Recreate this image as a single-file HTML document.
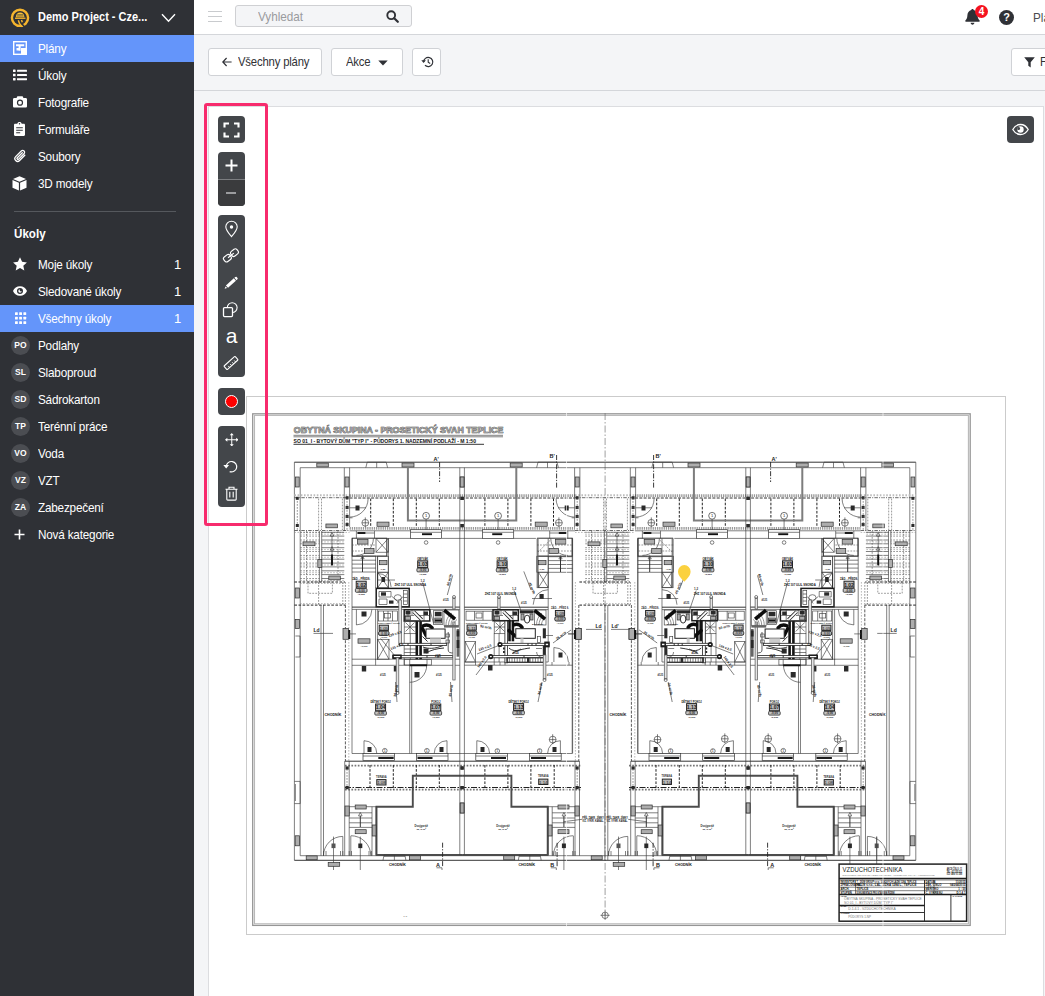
<!DOCTYPE html>
<html lang="cs">
<head>
<meta charset="utf-8">
<title>Plány</title>
<style>
*{box-sizing:border-box;margin:0;padding:0}
html,body{width:1045px;height:996px;overflow:hidden;background:#f4f5f7;font-family:"Liberation Sans",sans-serif;color:#2f3136}
#side{position:absolute;left:0;top:0;width:194px;height:996px;background:#2f3136;color:#fff}
#side .hd{position:absolute;left:0;top:0;width:194px;height:35px;background:#2f3136}
#side .hd .nm{position:absolute;left:38px;top:9px;font-size:13px;font-weight:bold;white-space:nowrap;transform:scaleX(.845);transform-origin:0 50%}
.it{position:absolute;left:0;width:194px;height:27px;font-size:13px;line-height:27px;white-space:nowrap;letter-spacing:-0.2px}
.it.on{background:#6495fa}
.it .tx{position:absolute;left:38px;top:0;transform:scaleX(.9);transform-origin:0 50%}
.sh{position:absolute;left:14px;top:226px;font-size:13.5px;font-weight:bold;transform:scaleX(.86);transform-origin:0 50%;white-space:nowrap}
.it .ct{position:absolute;right:13px;top:0}
.it svg{position:absolute}
.bd{position:absolute;left:11px;top:4px;width:19px;height:19px;border-radius:50%;background:#4b4d52;font-size:8.5px;font-weight:bold;line-height:19px;text-align:center;letter-spacing:0}
#top{position:absolute;left:194px;top:0;width:851px;height:35px;background:#fff;border-bottom:1px solid #d4d6da}
#bar{position:absolute;left:194px;top:35px;width:851px;height:56px;background:#f4f5f7;border-bottom:1px solid #d4d6da}
.btn{position:absolute;top:13px;height:28px;padding-top:1px;background:#fff;border:1px solid #d0d2d6;border-radius:3px;font-size:13px;line-height:26px;white-space:nowrap;letter-spacing:-0.2px;color:#2f3136}
.bt{position:absolute;top:0;transform:scaleX(.87);transform-origin:0 50%}
#cv{position:absolute;left:208px;top:106px;width:836px;height:900px;background:#fff;border:1px solid #dcdde0}
.tb{position:absolute;left:218px;width:27px;background:#43464a;border-radius:4px}
#hl{position:absolute;left:204px;top:103px;width:64px;height:423px;border:3px solid #f72b6d;border-radius:3px}
</style>
</head>
<body>
<div id="top">
<div style="position:absolute;left:14px;top:11px;width:14px;height:1px;background:#c9cbce;box-shadow:0 5px 0 #c9cbce,0 10px 0 #c9cbce"></div>
<div style="position:absolute;left:41px;top:5px;width:177px;height:22px;background:#f4f5f7;border:1px solid #cfd0d3;border-radius:3px"></div>
<span style="position:absolute;left:64px;top:9px;font-size:13px;color:#9a9b9e;transform:scaleX(.9);transform-origin:0 50%;white-space:nowrap">Vyhledat</span>
<svg style="position:absolute;left:192px;top:10px" width="13" height="13" viewBox="0 0 13 13"><circle cx="5.200" cy="5.200" r="3.900" fill="none" stroke="#2f3136" stroke-width="1.900"/><path d="M8.200 8.200 11.800 11.800" stroke="#2f3136" stroke-width="2.200" stroke-linecap="round"/></svg>
<svg style="position:absolute;left:771px;top:8px" width="15" height="18" viewBox="0 0 15 18"><path fill="#2f3136" d="M7.500 1c.7 0 1.200.5 1.200 1.100 2.400.6 3.900 2.700 3.900 5.200 0 3.300 1.300 4.400 2 5.100.5.500.1 1.400-.6 1.400H1c-.7 0-1.100-.9-.6-1.400.700-.7 2-1.800 2-5.100 0-2.500 1.500-4.600 3.900-5.200C6.300 1.500 6.800 1 7.500 1zM5.600 14.800h3.800c0 1-.9 1.900-1.900 1.900s-1.900-.9-1.900-1.900z"/></svg>
<div style="position:absolute;left:781px;top:5px;width:13px;height:13px;border-radius:50%;background:#f5121f;color:#fff;font-size:10px;font-weight:bold;line-height:13px;text-align:center">4</div>
<div style="position:absolute;left:805px;top:10px;width:15px;height:15px;border-radius:50%;background:#2f3136;color:#fff;font-size:11px;font-weight:bold;line-height:15px;text-align:center">?</div>
<span style="position:absolute;left:839px;top:10px;font-size:13px;color:#4a4c50;white-space:nowrap;transform:scaleX(.9);transform-origin:0 50%">Plány</span>
</div>
<div id="bar">
<div class="btn" style="left:14px;width:114px"><svg style="position:absolute;left:13px;top:8px" width="10" height="10" viewBox="0 0 10 10"><path d="M9.600 5H1M4.600 1 .8 5l3.800 4" fill="none" stroke="#2f3136" stroke-width="1.200"/></svg><span class="bt" style="left:29px">Všechny plány</span></div>
<div class="btn" style="left:137px;width:72px"><span class="bt" style="left:14px">Akce</span><svg style="position:absolute;left:46px;top:11px" width="10" height="6" viewBox="0 0 10 6"><path d="M.3.5h9.400L5 5.500z" fill="#2f3136"/></svg></div>
<div class="btn" style="left:218px;width:29px"><svg style="position:absolute;left:8px;top:7px" width="13" height="12" viewBox="0 0 13 12"><path d="M2.600 6a4.600 4.600 0 1 1 1.400 3.300" fill="none" stroke="#2f3136" stroke-width="1.200"/><path d="M.3 4.200h4.600L2.600 7z" fill="#2f3136"/><path d="M7.200 3.300v3l2 1.200" fill="none" stroke="#2f3136" stroke-width="1.100"/></svg></div>
<div class="btn" style="left:817px;width:60px"><svg style="position:absolute;left:12px;top:8px" width="11" height="11" viewBox="0 0 11 11"><path d="M.2.300h10.600L6.700 5.200v5.300L4.300 8.700V5.200z" fill="#2f3136"/></svg><span class="bt" style="left:28px">Filtr</span></div>
</div>
<div id="cv"></div>
<!--PLAN-->
<svg id="plan" width="1045" height="996" viewBox="0 0 1045 996" style="position:absolute;left:0;top:0">
<style>
.t{fill:none;stroke:#3d3d3d;stroke-width:.65}
.m{fill:none;stroke:#2a2a2a;stroke-width:.95}
.k{fill:none;stroke:#1c1c1c;stroke-width:1.5}
.kk{fill:none;stroke:#111;stroke-width:1.9}
.p{fill:none;stroke:#222;stroke-width:1.7}
.p3{fill:none;stroke:#151515;stroke-width:2.6}
.g{fill:none;stroke:#7d7d7d;stroke-width:2}
.g2{fill:none;stroke:#4c4c4c;stroke-width:1.9}
.d{fill:none;stroke:#555;stroke-width:.6;stroke-dasharray:1.8 1.2}
.dl{fill:none;stroke:#8a8a8a;stroke-width:.6;stroke-dasharray:1.6 1.4}
.dk{fill:none;stroke:#222;stroke-width:1;stroke-dasharray:2.6 1.5}
.dk2{fill:none;stroke:#333;stroke-width:.8;stroke-dasharray:3 1.4}
.dd{fill:none;stroke:#222;stroke-width:.9;stroke-dasharray:5 1.500 1.2 1.500}
.dd2{fill:none;stroke:#777;stroke-width:.7;stroke-dasharray:7 2 1.500 2}
.dd3{fill:none;stroke:#222;stroke-width:1.100;stroke-dasharray:6 1.500 1.500 1.500}
.bb{fill:none;stroke:#9a9a9a;stroke-width:2.8;stroke-dasharray:1.3 .9}
.bl{fill:none;stroke:#bdbdbd;stroke-width:2;stroke-dasharray:1.6 1.6}
.dd4{fill:none;stroke:#444;stroke-width:.8;stroke-dasharray:3.5 1.2 1 1.2}
.bdk{fill:none;stroke:#333;stroke-width:1;stroke-dasharray:3 1.300}
.bz{fill:none;stroke:#777;stroke-width:1.800;stroke-dasharray:1.700 1.500}
.lb{fill:#adadad;stroke:#2e2e2e;stroke-width:.7}
.rb{fill:#b9b9b9;stroke:#1e1e1e;stroke-width:.95}
.rb2{fill:#c4c4c4;stroke:#2a2a2a;stroke-width:.8}
.xr{fill:#1a1a1a;font-weight:bold}
.wb{fill:#fff;stroke:#333;stroke-width:.7}
.uw{fill:#fff;stroke:#222;stroke-width:1}
.cw{fill:#fff;stroke:#333;stroke-width:.7}
.bk{fill:#2a2a2a;stroke:none}
.bk2{fill:#555;stroke:none}
.p4{fill:none;stroke:#0c0c0c;stroke-width:3.4;stroke-linecap:round}
.p5{fill:none;stroke:#0c0c0c;stroke-width:3.6}
.duo{fill:none;stroke:#222;stroke-width:3.4}
.dui{fill:none;stroke:#fff;stroke-width:1.8}
.du{fill:#fff;stroke:#222;stroke-width:.8}
.du2{fill:none;stroke:#333;stroke-width:.8}
.dg{fill:#e4e4e4;stroke:#555;stroke-width:.7}
.dg2{fill:#ccc;stroke:none}
.hg{fill:none;stroke:#888;stroke-width:.9}
.hk3{fill:#666;stroke:none}
.hk{fill:none;stroke:#111;stroke-width:1.300}
.hk2{fill:#333;stroke:none}
.fo{fill:none;stroke:#cbcbcb;stroke-width:1}
.fi{fill:none;stroke:#969696;stroke-width:1.3}
.fi2{fill:none;stroke:#b8b8b8;stroke-width:1.1}
.wh{fill:#fff;stroke:none}
.tbx{fill:#fff;stroke:#222;stroke-width:1.500}
text{font-family:"Liberation Sans",sans-serif;fill:#333}
.x{fill:#444}
.xb{fill:#333;font-weight:bold}
.xk{fill:#111;font-weight:bold}
.xn{fill:#222}
.tt{font-weight:bold;fill:#9d9d9d;stroke:#333;stroke-width:.6;paint-order:stroke}
.ts{font-weight:bold;fill:#111}
.tv{fill:#222}
.tg{fill:#777}
</style>
<defs>
<g id="strip"><path class="d" d="M318.6 498.6V530M321.5 498.6V530M342.4 498.6V530"/>
<rect class="lb" x="325.9" y="524" width="11.5" height="3.8"/>
<path class="t" d="M321.7 532.3L344.3 532.3"/>
<path class="t" d="M321.7 536.1L344.3 536.1"/>
<path class="t" d="M321.7 540L344.3 540"/>
<path class="t" d="M321.7 543.8L344.3 543.8"/>
<path class="t" d="M321.7 547.7L344.3 547.7"/>
<path class="t" d="M321.7 551.5L344.3 551.5"/>
<path class="t" d="M321.7 555.4L344.3 555.4"/>
<path class="t" d="M321.7 559.2L344.3 559.2"/>
<path class="t" d="M321.7 563.1L344.3 563.1"/>
<path class="t" d="M321.7 566.9L344.3 566.9"/>
<path class="t" d="M321.7 570.8L344.3 570.8"/>
<path class="t" d="M321.7 574.6L344.3 574.6"/>
<path class="t" d="M321.7 578.5L344.3 578.5"/>
<path class="d" d="M300.2 532.3L319.4 532.3"/>
<path class="d" d="M300.2 536.1L319.4 536.1"/>
<path class="d" d="M300.2 540L319.4 540"/>
<path class="d" d="M300.2 543.8L319.4 543.8"/>
<path class="d" d="M300.2 547.7L319.4 547.7"/>
<path class="d" d="M300.2 551.5L319.4 551.5"/>
<path class="d" d="M300.2 555.4L319.4 555.4"/>
<path class="d" d="M300.2 559.2L319.4 559.2"/>
<path class="d" d="M300.2 563.1L319.4 563.1"/>
<path class="d" d="M300.2 566.9L319.4 566.9"/>
<path class="d" d="M300.2 570.8L319.4 570.8"/>
<path class="d" d="M300.2 574.6L319.4 574.6"/>
<path class="d" d="M300.2 578.5L319.4 578.5"/>
<path class="dl" d="M300.2 534.2L344.3 534.2"/>
<path class="dl" d="M300.2 541.9L344.3 541.9"/>
<path class="dl" d="M300.2 549.6L344.3 549.6"/>
<path class="dl" d="M300.2 557.3L344.3 557.3"/>
<path class="dl" d="M300.2 565L344.3 565"/>
<path class="dl" d="M300.2 572.7L344.3 572.7"/>
<path class="dl" d="M300.2 580.4L344.3 580.4"/>
<path class="t" d="M319.4 531V582M321.7 531V582"/>
<path class="d" d="M306.5 531V582"/>
<path class="d" d="M338 531V582"/>
<rect class="lb" x="303" y="541.9" width="12" height="3.8"/>
<rect class="lb" x="317.8" y="559.5" width="4" height="8"/>
<path class="t" d="M332 532.5l-1.8 3.6h3.600zM332 546.600l-1.8 3.600h3.600z"/>
<path class="t" d="M332 536L332 566"/>
<path class="kk" d="M332 554.5L332 565.2"/>
<path class="dk" d="M294.4 582L345 582"/>
<path class="dk" d="M294.4 605.1L345 605.1"/>
<path class="dl" d="M300 583.5L345 583.5"/>
<path class="dl" d="M300 603.6L345 603.6"/>
<rect class="d" x="308" y="582" width="24.4" height="11.3"/>
<rect class="lb" x="328.8" y="576" width="11.5" height="3.8"/>
<path class="d" d="M342.8 582V605M345.4 582V605"/>
<path class="d" d="M318.6 582V605"/>

<path class="t" d="M323.5 855.7A19.3 19.3 0 0 1 342.8 836.4"/>
<path class="t" d="M342.8 836.4L342.8 855.7"/>
<path class="t" d="M333.5 836.6L333.5 870"/>
<rect class="lb" x="306.2" y="855.9" width="11" height="3.8"/>
<rect class="bk2" x="331.5" y="843.5" width="4" height="4.6"/>
<path class="t" d="M323.5 851v4.7M326 851v4.7M340.500 851v4.7M342.800 851v4.7"/></g>
<g id="stro"><rect class="lb" x="316.8" y="463.1" width="11.5" height="3.8"/>
<rect class="lb" x="295.4" y="477" width="3.8" height="10"/>
<path class="d" d="M297.3 498L297.3 530"/>
<rect class="bk" x="295.8" y="496.8" width="3" height="3"/>
<rect class="bk" x="295.8" y="524" width="3" height="3"/>
<path class="t" d="M321 605V855.7M323.5 605V855.7"/>
<rect class="lb" x="295.2" y="588" width="4.4" height="10"/>
<rect class="lb" x="295.2" y="619.4" width="4.4" height="9.2"/>
<path class="t" d="M295.4 636h4.6v21h-4.6"/>

<path class="t" d="M313.5 633.4L333 633.4"/>
<path class="t" d="M294.4 781.4h5.8v22.2h-5.8M295.400 784v17"/>
<rect class="lb" x="295.2" y="835.8" width="4.4" height="10"/>
<rect class="lb" x="328.2" y="862.5" width="11.5" height="3.8"/></g>
<g id="shl"><path class="t" d="M344.3 467.7V530.8M349.6 467.7V527"/>
<rect class="lb" x="345" y="477" width="4" height="10"/>
<rect class="bk" x="345.6" y="496.2" width="3" height="3.2"/>
<rect class="bk" x="345.6" y="505.9" width="3" height="3.2"/>
<rect class="bk" x="345.6" y="514.9" width="3" height="3.2"/>
<rect class="bk" x="345.6" y="522.9" width="3" height="3.2"/>
<path class="d" d="M347 498L347 530"/>
<path class="t" d="M368.1 498.6A18.5 18.5 0 0 1 349.6 517.1"/>
<path class="t" d="M349.6 507.8L366 507.8"/>
<path class="t" d="M349.6 517.8L352.5 517.8"/>
<rect class="bk" x="355.5" y="505.5" width="4" height="5"/>
<path class="dk" d="M370.7 498.6L370.7 527"/>
<path class="dk" d="M393.3 498.6L393.3 527"/>
<path class="dk" d="M416.3 498.6L416.3 527"/>
<path class="dk" d="M439.3 498.6L439.3 527"/>
<rect class="lb" x="402" y="463" width="12" height="4"/>
<rect class="lb" x="377" y="522.1" width="12" height="4.2"/>
<circle class="t" cx="365.3" cy="522.8" r="3.4"/><path class="t" d="M361.9 522.8L368.7 522.8"/><path class="t" d="M365.3 517.4L365.3 527.2"/>
<path class="t" d="M365.8 467.7l1.400-5.5h19l1.400 5.5M376.700 462.2v5.5"/>
<path class="g" d="M407.900 467.7V520.6H462.1"/>
<circle class="cw" cx="426.1" cy="515.8" r="3.4"/>

<path class="t" d="M426.1 519.2L426.1 533"/>
<rect class="wb" x="410.5" y="529.7" width="31.1" height="8.7"/>
<path class="kk" d="M422 534.2L432 534.2"/>
<path class="t" d="M410.5 532.3L441.6 532.3"/>
<circle class="t" cx="426.1" cy="542.5" r="1.8"/>
<path class="t" d="M388.3 538.4L410.5 538.4"/>
<path class="t" d="M441.6 538.4L462.1 538.4"/>
<path class="dk2" d="M345.4 605V761"/>
<path class="dl" d="M348.8 582L348.8 761"/>
<path class="t" d="M352 538.4L352 753.5"/>
<rect class="lb" x="343" y="628.5" width="5.5" height="10.8"/>
<path class="kk" d="M349.3 630L349.3 639"/>
<path class="t" d="M349 633.9L356 633.9"/>
<path class="t" d="M352 753.5L462.1 753.5"/>
<path class="m" d="M345 761.2L462.1 761.2"/>
<path class="t" d="M344.7 761V855.7M349.2 761V855.7"/>
<rect class="bk" x="345.5" y="766.4" width="3.2" height="3.2"/>
<rect class="bk" x="345.5" y="786" width="3.2" height="3.2"/>
<path class="d" d="M347 769L347 786"/>
<path class="dk" d="M370 765L370 790"/>
<path class="dk" d="M393.3 765L393.3 790"/>
<path class="dk" d="M416.3 765L416.3 790"/>
<path class="dk" d="M439.3 765L439.3 790"/>
<rect class="lb" x="345" y="806" width="4.2" height="10"/>
<path class="g2" d="M462.1 775.8H412.8V806.7H376.500V855H462.1"/>
<path class="t" d="M372 806.7V855.7M376 806.7V855"/>
<rect class="lb" x="372.2" y="825" width="3.8" height="11"/>
<path class="t" d="M349.2 806.7L376.5 806.7"/>
<path class="t" d="M349.2 812.8L372 812.8"/>
<path class="t" d="M349.2 818L372 818"/>
<path class="t" d="M349.2 822.8L372 822.8"/>
<path class="t" d="M349.2 827.4L372 827.4"/>
<path class="t" d="M360.3 812.5l-1.800 3.400h3.600z"/>
<path class="m" d="M360.3 816L360.3 827"/>
<rect class="lb" x="355.2" y="805" width="11" height="4"/>
<rect class="lb" x="355.2" y="829.7" width="11" height="4"/>
<path class="t" d="M350.8 835.7A20 20 0 0 1 370.8 855.7"/>
<path class="t" d="M350.8 836L350.8 855.7"/>
<path class="t" d="M360.3 836.6L360.3 870"/>
<rect class="bk" x="358.3" y="843.5" width="4" height="4.6"/>
<path class="t" d="M349.2 851v4.7M351.500 851v4.7M369 851v4.7M371.400 851v4.7"/>
<path class="t" d="M383 860.3l1-5.300h20.900l1 5.300M394.400 855v5.300"/>
<path class="t" d="M384 856.4L405 856.4"/>
<rect class="lb" x="409.5" y="855.8" width="11" height="4"/>



<path class="t" d="M459.8 467.7L459.8 855"/>
<rect class="bk" x="460.5" y="766.4" width="3.2" height="3.2"/>
<rect class="bk" x="460.5" y="786" width="3.2" height="3.2"/>
<rect class="bk" x="460.5" y="496.8" width="3.2" height="3.2"/>
<rect class="bk" x="460.5" y="524" width="3.2" height="3.2"/>
<rect class="lb" x="460.2" y="477" width="3.8" height="10"/>
<rect class="lb" x="460.2" y="803" width="3.8" height="10"/></g>
<g id="bld"><use href="#shl"/><use href="#shl" transform="translate(924.200,0) scale(-1,1)"/><path class="dd" d="M439.6 462L439.6 482"/>

<path class="dd" d="M442.6 842.7L442.6 867"/>

<path class="t" d="M436.500 867.800h5.500v2.200"/>
<path class="kk" d="M357.4 533L365.5 533"/>
<path class="t" d="M365.5 533L374.5 533"/>
<path class="t" d="M356.4 530.8V538.4M374.5 530.8V538.4"/>
<rect class="m" x="352.2" y="538.2" width="34.6" height="17.9"/>
<path class="t" d="M373.4 538.4A17 17 0 0 1 356.4 555.4"/>
<rect class="t" x="376" y="538.4" width="12.3" height="13.8"/><path class="t" d="M376 538.4L388.3 552.2"/><path class="t" d="M388.3 538.4L376 552.2"/>
<path class="d" d="M352 545H376M352 551H376"/>
<rect class="lb" x="357.5" y="539.5" width="10.5" height="4.6"/>
<rect class="lb" x="364.5" y="548.5" width="9.5" height="5"/>
<path class="t" d="M388.3 538.4L388.3 556"/>
<path class="t" d="M352 556.2L376 556.2"/>
<path class="t" d="M352 560.2L376 560.2"/>
<path class="t" d="M352 564.1L376 564.1"/>
<path class="t" d="M352 568.1L376 568.1"/>
<path class="t" d="M352 572L376 572"/>
<path class="m" d="M362.5 557L362.5 572"/>
<path class="t" d="M362.500 555.500l-1.600 3.200h3.200z"/>
<path class="t" d="M375.600 556V588M377.600 556V588"/>
<rect class="t" x="377.6" y="556.2" width="10.7" height="16"/>
<rect class="lb" x="379.5" y="560.5" width="7.5" height="4.2"/>

<rect class="t" x="377.6" y="572.2" width="10.7" height="15.6"/><path class="t" d="M377.6 572.2L388.3 587.8"/><path class="t" d="M388.3 572.2L377.6 587.8"/>
<path class="t" d="M388.3 556L388.3 588"/>
<rect class="rb" x="356.2" y="581.2" width="10" height="6.8"/><rect class="rb2" x="355.4" y="588.5" width="11.6" height="3.8" rx="1"/>
<path class="t" d="M377.6 573.4A13.5 13.5 0 0 1 391.1 586.9"/>
<path class="m" d="M377.6 573.4L377.6 588"/>
<path class="t" d="M377.6 580L395 580"/>
<rect class="bk" x="381.5" y="577" width="3.6" height="5"/>
<rect class="k" x="376.2" y="588.4" width="33" height="18.4"/>
<path class="t" d="M379 591.500h12v5.500h-12zM379 599h8v5.500h-8zM392 596.500l9 8M397 603.500l6-7"/>
<ellipse class="t" cx="397.800" cy="597.500" rx="3.600" ry="2.800"/>
<rect class="t" x="403.5" y="590.5" width="3.8" height="14"/>
<path class="t" d="M403.500 594h3.800M403.500 597.500h3.800M403.500 601h3.800"/>
<rect class="bk" x="381" y="592.3" width="5" height="3.4"/>
<rect class="bk" x="389" y="600.5" width="4.5" height="3.2"/>


<path class="t" d="M422.7 582.500L433.5 623.2"/>
<path class="m" d="M352 607.1L459.8 607.1"/>
<path class="t" d="M352 609.4L459.8 609.4"/>
<path class="t" d="M371.9 609.4A15.5 15.5 0 0 1 356.4 624.9"/>
<path class="t" d="M356.4 609.4L356.4 625"/>
<rect class="bk" x="361.5" y="611.5" width="5" height="5"/>
<path class="t" d="M375.600 609.4V660M377.600 609.4V660"/>
<rect class="lb" x="358" y="638.8" width="12" height="4.4"/>

<rect class="t" x="378.5" y="611" width="19" height="10"/>
<path class="t" d="M383.500 611v10M388 611v10M392.500 611v10"/>
<rect class="t" x="384.5" y="613.5" width="6" height="4.5"/>

<rect class="rb" x="379.2" y="625.2" width="9.2" height="5.2"/>

<rect class="rb" x="378.6" y="631.2" width="10.4" height="4.2" rx="1.5"/>


<rect class="t" x="377.6" y="639.3" width="11.4" height="19.9"/><path class="t" d="M377.6 639.3L389 659.2"/><path class="t" d="M389 639.3L377.6 659.2"/>
<path class="t" d="M380.6 638.5L395 656"/>


<path class="t" d="M352 659.2L459.8 659.2"/>
<path class="t" d="M352 665.3L459.8 665.3"/>
<path class="t" d="M375.600 659.2V665.3M398 659.2V665.3M409.700 659.2V665.3M427 659.2V665.3"/>
<rect class="k" x="404.2" y="609.8" width="25.6" height="11.2"/>
<path class="t" d="M408 610v11M412 610v5M404.200 615.500h10M424 610v11M417 615.500h12"/>
<rect class="bk" x="405.5" y="611" width="5" height="3.5"/>
<rect class="lb" x="405.5" y="616.5" width="5" height="3.5"/>
<rect class="bk" x="423.5" y="611.5" width="4.5" height="3.5"/>
<path class="duo" d="M413.600 611.600L421.800 619.800"/>
<path class="dui" d="M413.600 611.600L421.800 619.800"/>
<rect class="t" x="433.6" y="610.7" width="9.2" height="13.8"/>
<rect class="bk" x="434.8" y="611.8" width="6.8" height="4.5"/>
<rect class="lb" x="434.8" y="618" width="6.8" height="5"/>
<path class="kk" d="M435 620.5L441.5 620.5"/>
<rect class="dg" x="398.8" y="600" width="2.7" height="45"/>
<rect class="t" x="404.2" y="621" width="12" height="12.7"/>
<path class="t" d="M404.200 627h12M410 621v12.700M405.500 622.500l9 9M414.500 622.500l-9 9"/>
<path class="t" d="M404.2 633.700V665M410.3 633.700V660"/>
<path class="p3" d="M416.8 621.2L416.8 659.3"/>
<path class="p3" d="M420.6 621.2L420.6 659.3"/>
<path class="p4" d="M423.200 625.800c3-1.300 6.500-.8 9 2"/>
<path class="p4" d="M422.500 628.500L426 635.500"/>
<path class="m" d="M422.500 636.500l5 5"/>
<rect class="uw" x="426" y="629" width="19.1" height="9.3"/>
<rect class="dg2" x="430" y="638.3" width="11" height="4.8"/>
<rect class="du" x="399.6" y="643.3" width="47.1" height="2.1"/>
<rect class="du" x="393" y="655.5" width="59.8" height="2.3"/>
<rect class="k" x="393" y="655.2" width="8" height="3"/>
<path class="m" d="M408 643.300v2.100M431 643.300v2.100M427 655.500v2.300M438 655.500v2.300"/>
<path class="t" d="M404.200 649h12M404.200 652.500h12"/>
<path class="m" d="M423 647c5 2 12 2 20-1.500M426 653c5-3 11-4.500 18-5"/>
<rect class="bk" x="423.5" y="648.5" width="5" height="5"/>

<path class="du2" d="M448.200 632V650c0 2.500 2 3 5.400 3"/>
<rect class="t" x="446" y="634" width="3.5" height="3"/>
<rect class="t" x="446" y="640" width="3.5" height="3"/>
<rect class="dg" x="452.8" y="622" width="2.3" height="58"/>
<rect class="hk3" x="456.6" y="629" width="2.7" height="27.7"/>
<rect class="bk" x="456.6" y="630.5" width="2.7" height="6"/>
<rect class="bk" x="456.6" y="640" width="2.7" height="8"/>
<rect class="t" x="444" y="610" width="14.9" height="15.3"/>
<path class="hg" d="M446 625c0-5 2-9 6-12M448.500 625c0-4 1.800-7.500 5-10M451 625c0-3 1.500-6 4-8M453.500 625c.300-2 1.500-4 3.500-5.500"/>
<path class="p5" d="M444.200 610.200L455.100 619.100"/>
<rect class="hk3" x="444" y="625.3" width="14.9" height="2.3"/>
<rect class="t" x="404.2" y="659.3" width="27.1" height="5.7"/>
<path class="t" d="M409.7 665.3V753.5M411.7 665.3V753.5"/>
<path class="t" d="M426.7 665.3A17 17 0 0 1 409.7 682.3"/>
<path class="kk" d="M409.7 665.3L427 665.3"/>
<rect class="bk" x="414.5" y="672" width="5" height="5.5"/>
<rect class="bk" x="361.8" y="666" width="4.4" height="5.5"/>
<rect class="bk" x="393.8" y="666" width="4.4" height="5.5"/>
<rect class="dg" x="396.2" y="657.8" width="2.6" height="34"/>
<circle class="t" cx="397.5" cy="693" r="1.5"/>


<rect class="rb" x="375.6" y="704" width="10" height="6.8"/><rect class="rb2" x="374.8" y="711.3" width="11.6" height="3.8" rx="1"/>
<rect class="rb" x="430.8" y="704" width="10" height="6.8"/><rect class="rb2" x="430" y="711.3" width="11.6" height="3.8" rx="1"/>

<path class="t" d="M395.5 682L397 702"/>

<path class="t" d="M450.5 682L452 702"/>
<rect class="wb" x="363" y="753.5" width="31.4" height="6.9"/>
<path class="kk" d="M378.3 758L393.7 758"/>
<path class="t" d="M363 756L394.4 756"/>
<path class="t" d="M364 740.7A12.8 12.8 0 0 1 376.8 753.5"/>
<path class="t" d="M364 740.7L364 753.5"/>
<rect class="bk" x="367.5" y="747" width="4" height="5"/>
<circle class="t" cx="384.8" cy="750.7" r="2.3"/>

<rect class="wb" x="416.6" y="753.5" width="31.4" height="6.9"/>
<path class="kk" d="M417.5 758L432.5 758"/>
<path class="t" d="M416.6 756L448 756"/>
<path class="t" d="M434.2 753.5A12.8 12.8 0 0 1 447 740.7"/>
<path class="t" d="M447 740.7L447 753.5"/>
<rect class="bk" x="439.5" y="747" width="4" height="5"/>
<circle class="t" cx="426.9" cy="750.7" r="2.3"/>

<rect class="rb" x="417.7" y="560.8" width="10" height="6.8"/><rect class="rb2" x="416.9" y="568.1" width="11.6" height="3.8" rx="1"/>

<path class="t" d="M452.7 575.4L447.3 595"/>
<rect class="dg" x="452.8" y="598" width="2.3" height="11"/>
<circle class="t" cx="454" cy="597" r="1.5"/>


<rect class="rb" x="376.8" y="779.6" width="9.2" height="5.4"/>
<path class="dd" d="M556.6 455L556.6 488.5"/>

<path class="dd" d="M557.1 842.8L557.1 867"/>

<path class="t" d="M550.800 867.800h5.500v2.200"/>
<path class="kk" d="M558.7 533L566.8 533"/>
<path class="t" d="M549.7 533L558.7 533"/>
<path class="t" d="M549.700 530.8V538.4M567.800 530.8V538.4"/>
<rect class="m" x="537.6" y="538.2" width="34.6" height="17.9"/>
<path class="g" d="M537.6 538.4L537.6 587.6"/>
<path class="t" d="M567.8 555.4A17 17 0 0 1 550.8 538.4"/>
<path class="d" d="M537 545H572M537 551H572"/>
<path class="d" d="M538 552L551 539.5"/>
<rect class="lb" x="555.5" y="539.5" width="10.5" height="4.6"/>
<rect class="lb" x="549" y="548.5" width="9.5" height="5"/>
<path class="t" d="M548.2 556.7L572.6 556.7"/>
<path class="t" d="M548.2 560.6L572.6 560.6"/>
<path class="t" d="M548.2 564.5L572.6 564.5"/>
<path class="t" d="M548.2 568.4L572.6 568.4"/>
<path class="t" d="M548.2 572.3L572.6 572.3"/>
<path class="m" d="M560.5 557L560.5 572"/>
<path class="t" d="M560.500 555.700l-1.600 3.200h3.200z"/>
<rect class="t" x="536.8" y="556.2" width="11.4" height="16"/>
<rect class="lb" x="538.5" y="560.5" width="7.5" height="4.2"/>

<rect class="t" x="538.4" y="572.2" width="9.8" height="15.4"/><path class="t" d="M538.4 572.2L548.2 587.6"/><path class="t" d="M548.2 572.2L538.4 587.6"/>
<path class="t" d="M548.2 538.4L548.2 662"/>
<path class="t" d="M536.8 587.6L548.2 587.6"/>
<path class="t" d="M533.2 604.7A15 15 0 0 1 548.2 589.7"/>
<rect class="bk" x="539.5" y="594" width="4.2" height="5"/>
<path class="t" d="M532 598.5L552 598.5"/>
<path class="t" d="M572.6 538.4L572.6 753.5"/>
<rect class="rb" x="497.1" y="560.8" width="10" height="6.8"/><rect class="rb2" x="496.3" y="568.1" width="11.6" height="3.8" rx="1"/>


<path class="t" d="M514 590.5L521 611"/>

<path class="t" d="M523.8 571.4L531 590"/>

<path class="m" d="M464.4 607.2L548.2 607.2"/>
<path class="t" d="M464.4 609.6L548.2 609.6"/>
<rect class="dg" x="497.8" y="598" width="2.3" height="11"/>
<circle class="t" cx="499" cy="597" r="1.5"/>


<rect class="rb" x="555.4" y="610.5" width="9.2" height="5.4"/>

<rect class="rb" x="554.8" y="616.8" width="10.4" height="4.2" rx="1.5"/>



<path class="t" d="M553 643L571 630"/>
<path class="t" d="M568 633.9L580 633.9"/>
<rect class="lb" x="575.8" y="628.5" width="5.4" height="10.8"/>
<path class="kk" d="M575 630L575 639"/>
<path class="t" d="M553.9 647.5A14.5 14.5 0 0 1 568.4 662"/>
<path class="t" d="M553.9 647.5L553.9 662"/>
<rect class="bk" x="558.5" y="652.5" width="4" height="5"/>
<rect class="t" x="466" y="611.2" width="26" height="9"/>
<path class="t" d="M474.500 611.200v9M483 611.200v9"/>
<rect class="t" x="476" y="613" width="6" height="5"/>

<rect class="rb" x="467.1" y="625" width="9.2" height="5.2"/>

<rect class="rb" x="466.5" y="631" width="10.4" height="4.2" rx="1.5"/>



<rect class="t" x="465.2" y="641.6" width="10.3" height="20.4"/><path class="t" d="M465.2 641.6L475.5 662"/><path class="t" d="M475.5 641.6L465.2 662"/>

<path class="t" d="M477 654L500 645"/>

<path class="t" d="M476 675L490 656.5"/>
<rect class="bk" x="488" y="665" width="4.5" height="5.5"/>
<circle class="t" cx="490.3" cy="656.5" r="1.5"/>
<path class="t" d="M464.4 662L548.2 662"/>
<path class="t" d="M464.4 665.2L572.6 665.2"/>
<path class="t" d="M475.500 662V665.2M500 662V665.2M505 662V665.2M552 662V665.2M569 662V665.2"/>
<rect class="k" x="493" y="609.8" width="25.3" height="10.9"/>
<path class="t" d="M497 610v10.700M501 610v5M493 615.500h10M513 610v10.700M507 615.500h11"/>
<rect class="bk" x="494.5" y="611" width="5" height="3.5"/>
<rect class="lb" x="494.5" y="616.5" width="5" height="3.5"/>
<rect class="bk" x="512.5" y="611.5" width="4.5" height="3.5"/>
<path class="duo" d="M503.600 611.600L511.800 619.800"/>
<path class="dui" d="M503.600 611.600L511.800 619.800"/>
<rect class="bk" x="519.8" y="610.3" width="13.8" height="3.1"/>
<ellipse class="m" cx="527.100" cy="619.100" rx="2.700" ry="4"/>
<rect class="lb" x="521" y="614" width="3" height="6"/>
<rect class="lb" x="530" y="614" width="3" height="6"/>
<rect class="t" x="494.2" y="621" width="11.8" height="12.7"/>
<path class="t" d="M494.200 627h11.800M500 621v12.700M495.500 622.500l9 9M504.500 622.500l-9 9"/>
<path class="t" d="M494.2 633.700V665M499.100 633.700V662"/>
<rect class="du" x="504.9" y="621" width="2.7" height="41.8"/>
<path class="p3" d="M509.5 620.7L509.5 641.3"/>
<path class="p3" d="M512.9 620.7L512.9 641.3"/>
<path class="p4" d="M513.700 625c3-1.300 6-.6 8.400 2.400"/>
<path class="p4" d="M509 630.600L515.200 636"/>
<rect class="uw" x="515.8" y="628.7" width="19.5" height="9.6"/>
<rect class="dg2" x="520.5" y="638.3" width="3" height="5"/>

<rect class="bk" x="542.8" y="628.3" width="3.1" height="10"/>
<rect class="bk" x="542.8" y="646" width="3.1" height="9"/>
<rect class="t" x="537.5" y="636.5" width="3" height="6"/>
<path class="t" d="M546 635.5L553 635.5"/>
<rect class="du" x="498.4" y="643.3" width="50.5" height="2.3"/>
<rect class="du" x="489.2" y="655.5" width="55.1" height="2.3"/>
<circle class="k" cx="500" cy="644.5" r="1.8"/>
<rect class="k" x="545" y="642.3" width="4" height="4.3"/>
<circle class="k" cx="490.8" cy="656.6" r="1.8"/>
<path class="m" d="M528 643.300v2.300M532 643.300v2.300M536 643.300v2.300M524 655.500v2.300"/>
<rect class="bk" x="503" y="647.5" width="1.8" height="2"/>
<rect class="bk" x="503" y="651" width="1.8" height="2"/>
<path class="m" d="M509 648c3 3 8 3.500 12 1M512 653.500c5-3 10-4.500 18-5.500"/>

<path class="t" d="M536.700 652c0 3 2 5 6 5.500"/>
<path class="t" d="M536 648.500h6"/>
<rect class="m" x="506.8" y="657.8" width="36.8" height="4.6"/>
<path class="t" d="M509.4 657.800v4.600M512 657.800v4.600M514.6 657.800v4.600M517.2 657.800v4.600M519.8 657.800v4.600M522.4 657.800v4.600M525 657.800v4.600M527.6 657.800v4.600M530.2 657.800v4.600M532.8 657.800v4.600M535.4 657.800v4.600M538 657.800v4.600M540.6 657.800v4.600"/>
<rect class="bk" x="527" y="658" width="2.5" height="4.2"/>
<rect class="t" x="534.4" y="610" width="11.6" height="15"/>
<path class="hg" d="M536.500 625c0-5 2-9 5.500-12M539 625c0-4 1.500-7 4.500-9.500M541.500 625c0-3 1.200-5 3.500-7"/>
<path class="p5" d="M534.600 610.400L545.100 619.100"/>
<rect class="dg" x="543.2" y="655" width="2.7" height="24"/>
<circle class="t" cx="544.5" cy="680" r="1.5"/>

<rect class="rb" x="513.6" y="703.6" width="10" height="6.8"/><rect class="rb2" x="512.8" y="710.9" width="11.6" height="3.8" rx="1"/>

<path class="t" d="M542 682L538 702"/>
<circle class="t" cx="552.7" cy="739.6" r="3.4"/><path class="t" d="M549.3 739.6L556.1 739.6"/><path class="t" d="M552.7 734.2L552.7 744"/>
<rect class="wb" x="475.8" y="753.5" width="31.7" height="6.9"/>
<path class="kk" d="M491 758L506 758"/>
<path class="t" d="M475.8 756L507.5 756"/>
<path class="t" d="M476.8 740.7A12.8 12.8 0 0 1 489.6 753.5"/>
<path class="t" d="M476.8 740.7L476.8 753.5"/>
<rect class="bk" x="480.5" y="747" width="4" height="5"/>
<circle class="t" cx="497.3" cy="751" r="2.3"/>

<rect class="wb" x="529.5" y="753.5" width="31.7" height="6.9"/>
<path class="kk" d="M531 758L546 758"/>
<path class="t" d="M529.5 756L561.2 756"/>
<path class="t" d="M547.6 753.5A12.8 12.8 0 0 1 560.4 740.7"/>
<path class="t" d="M560.4 740.7L560.4 753.5"/>
<rect class="bk" x="552.5" y="747" width="4" height="5"/>
<circle class="t" cx="539.6" cy="751" r="2.3"/>


<rect class="rb" x="538.7" y="779.1" width="9.2" height="5.4"/>



<path class="t" d="M563.6 821.7L582 819.3"/></g>
</defs>
<rect class="fo" x="246.5" y="396.5" width="759" height="538"/>
<rect class="fi" x="252.7" y="413.8" width="717.5" height="511.6"/>
<rect class="fi2" x="254.5" y="415.4" width="713.9" height="508.4"/>
<path class="dd2" d="M605.1 413L605.1 915"/>
<circle class="t" cx="605.1" cy="915.3" r="3.2"/>
<path class="t" d="M600.500 915.300h9.200M605.100 910.700v9.200"/>
<text class="xk" x="403.5" y="917" font-size="3.2">- ..</text>
<text class="tt" x="293.8" y="433" font-size="9.3" textLength="209.500" lengthAdjust="spacingAndGlyphs">OBYTNÁ SKUPINA - PROSETICKÝ SVAH TEPLICE</text>
<path class="t" d="M293.5 435.3L503 435.3"/>
<path class="t" d="M293.5 436.8L503 436.8"/>
<text class="ts" x="293.5" y="442.6" font-size="5.4" textLength="182.500" lengthAdjust="spacingAndGlyphs">SO 01_I - BYTOVÝ DŮM "TYP I" - PŮDORYS 1. NADZEMNÍ PODLAŽÍ -  M 1:50</text>
<path class="m" d="M293.5 444.3L484 444.3"/>
<path class="m" d="M294.4 462.2L915.8 462.2"/>
<path class="t" d="M300.2 467.7L909.8 467.7"/>
<path class="t" d="M294.4 462.2V860.3M300.2 467.7V855.7"/>
<path class="t" d="M915.800 462.2V860.3M909.800 467.7V855.7"/>
<path class="m" d="M294.4 860.3L915.8 860.3"/>
<path class="t" d="M300.2 855.7L909.8 855.7"/>
<path class="bb" d="M349.6 495.6L575 495.6"/>
<path class="bdk" d="M349.6 498L575 498"/>
<path class="bb" d="M349.6 528.4L575 528.4"/>
<path class="t" d="M349.6 530.8L575 530.8"/>
<path class="bb" d="M635 495.6L860.6 495.6"/>
<path class="bdk" d="M635 498L860.6 498"/>
<path class="bb" d="M635 528.4L860.6 528.4"/>
<path class="t" d="M635 530.8L860.6 530.8"/>
<path class="bl" d="M294.4 495.3L349.6 495.3"/>
<path class="dd4" d="M294.4 497.7L349.6 497.7"/>
<path class="dd4" d="M294.4 530.5L349.6 530.5"/>
<path class="dl" d="M294.4 532.4L349.6 532.4"/>
<path class="bl" d="M575 495.3L635 495.3"/>
<path class="dd4" d="M575 497.7L635 497.7"/>
<path class="dd4" d="M575 530.5L635 530.5"/>
<path class="dl" d="M575 532.4L635 532.4"/>
<path class="bl" d="M860.6 495.3L915.8 495.3"/>
<path class="dd4" d="M860.6 497.7L915.8 497.7"/>
<path class="dd4" d="M860.6 530.5L915.8 530.5"/>
<path class="dl" d="M860.6 532.4L915.8 532.4"/>
<path class="bz" d="M345 765.6L581 765.6"/>
<path class="dd3" d="M345 787.5L581 787.5"/>
<path class="bz" d="M345 789.6L581 789.6"/>
<path class="bz" d="M629 765.6L865 765.6"/>
<path class="dd3" d="M629 787.5L865 787.5"/>
<path class="bz" d="M629 789.6L865 789.6"/>
<use href="#strip"/><use href="#strip" transform="translate(285,0)"/><use href="#strip" transform="translate(1210.200,0) scale(-1,1)"/>
<use href="#stro"/><use href="#stro" transform="translate(1210.200,0) scale(-1,1)"/>
<text class="xr" x="313.5" y="632" font-size="5">Ld</text>
<text text-anchor="end" class="xr" x="896.7" y="632" font-size="5">Ld</text>
<use href="#bld"/><use href="#bld" transform="translate(1210.200,0) scale(-1,1)"/>
<text class="xk" x="324.5" y="716.3" font-size="3.6">CHODNÍK</text>
<text class="xk" x="609.5" y="716.3" font-size="3.6">CHODNÍK</text>
<text text-anchor="end" class="xk" x="885.7" y="716.3" font-size="3.6">CHODNÍK</text>
<text class="xn" x="426.1" y="517.2" font-size="4" text-anchor="middle">1</text>
<text class="xk" x="389" y="866" font-size="3.6">CHODNÍK</text>
<text class="xb" x="421.2" y="827" font-size="2.8" text-anchor="middle">Dvojgaráž</text>
<text class="xb" x="421.2" y="830" font-size="2.4" text-anchor="middle">32,40 m²</text>
<text class="xn" x="498.1" y="517.2" font-size="4" text-anchor="middle">1</text>
<text text-anchor="end" class="xk" x="535.2" y="866" font-size="3.6">CHODNÍK</text>
<text class="xb" x="503" y="827" font-size="2.8" text-anchor="middle">Dvojgaráž</text>
<text class="xb" x="503" y="830" font-size="2.4" text-anchor="middle">32,40 m²</text>
<text class="xr" x="433.5" y="460.8" font-size="5.5">A'</text>
<text class="xr" x="436" y="866.8" font-size="5.5">A</text>
<text class="xb" x="380" y="569.5" font-size="2.4">-1,50</text>
<text class="xk" x="361.2" y="580.2" font-size="2.6" text-anchor="middle">ZÁD. - PŘEDS.</text>
<text class="xr" x="361.2" y="586.5" font-size="5" text-anchor="middle">1.02</text>
<text class="xk" x="361.2" y="591.5" font-size="3" text-anchor="middle">-0,00</text>
<text class="xk" x="361.2" y="595.3" font-size="2.4" text-anchor="middle">+0,000</text>
<text class="xk" x="394.4" y="586.3" font-size="2.9">ZHZ 107 ULIL SNONDA</text>
<text class="xb" x="420.5" y="581.8" font-size="3">1.2</text>
<text class="xb" x="364" y="646.5" font-size="2.2" text-anchor="middle">+0,000</text>
<text class="xk" x="378" y="623.8" font-size="2.3">KUCHYŇSKÝ KOUT</text>
<text class="xn" x="383.8" y="629.7" font-size="4.4" text-anchor="middle">1.05</text>
<text class="xb" x="383.8" y="634.5" font-size="3" text-anchor="middle">-0,00</text>
<text class="xb" x="383.8" y="638" font-size="2.2" text-anchor="middle">+0,000</text>
<text class="xk" x="389" y="637" font-size="3.3" transform="rotate(-18 389 637)">125 v.2,5</text>
<text class="xk" x="391" y="650" font-size="3.3" transform="rotate(-22 391 650)">125 v.2,5</text>
<text class="xk" x="435" y="656.8" font-size="2.6">#125</text>
<text class="xb" x="380" y="676" font-size="2.6">#125</text>
<text class="xb" x="436" y="676" font-size="2.6">#125</text>
<text class="xk" x="380.6" y="703" font-size="2.6" text-anchor="middle">DĚTSKÝ POKOJ</text>
<text class="xr" x="380.6" y="709.3" font-size="5" text-anchor="middle">1.04</text>
<text class="xk" x="380.6" y="714.3" font-size="3" text-anchor="middle">-0,00</text>
<text class="xk" x="380.6" y="718.1" font-size="2.4" text-anchor="middle">+0,000</text>
<text class="xk" x="435.8" y="703" font-size="2.6" text-anchor="middle">POKOJ</text>
<text class="xr" x="435.8" y="709.3" font-size="5" text-anchor="middle">1.07</text>
<text class="xk" x="435.8" y="714.3" font-size="3" text-anchor="middle">-0,00</text>
<text class="xk" x="435.8" y="718.1" font-size="2.4" text-anchor="middle">+0,000</text>
<text class="xk" x="396" y="697" font-size="3.5" transform="rotate(-80 396 697)">36 m³/h</text>
<text class="xk" x="451" y="697" font-size="3.5" transform="rotate(-80 451 697)">45 m³/h</text>
<text class="xb" x="384.8" y="751.8" font-size="2.8" text-anchor="middle">1</text>
<text class="xb" x="426.9" y="751.8" font-size="2.8" text-anchor="middle">1</text>
<text class="xk" x="422.7" y="559.8" font-size="2.6" text-anchor="middle">OBÝVÁK</text>
<text class="xr" x="422.7" y="566.1" font-size="5" text-anchor="middle">1.03</text>
<text class="xk" x="422.7" y="571.1" font-size="3" text-anchor="middle">-0,00</text>
<text class="xk" x="422.7" y="574.9" font-size="2.4" text-anchor="middle">+0,000</text>
<text class="xk" x="449" y="586" font-size="3.5" transform="rotate(-75 449 586)">60 m³/h</text>
<text class="xb" x="443" y="601" font-size="2.6">#125</text>
<text class="xb" x="381.4" y="777.5" font-size="2.6" text-anchor="middle">TERASA</text>
<text class="xn" x="381.4" y="784.2" font-size="4.4" text-anchor="middle">1.08</text>
<text class="xr" x="549.5" y="457.5" font-size="5.5">B'</text>
<text class="xr" x="550.3" y="866.8" font-size="5.5">B</text>
<text class="xb" x="539" y="569.5" font-size="2.4">-1,50</text>
<text class="xk" x="502.1" y="559.8" font-size="2.6" text-anchor="middle">OBÝVÁK</text>
<text class="xr" x="502.1" y="566.1" font-size="5" text-anchor="middle">1.10</text>
<text class="xk" x="502.1" y="571.1" font-size="3" text-anchor="middle">-0,00</text>
<text class="xk" x="502.1" y="574.9" font-size="2.4" text-anchor="middle">+0,000</text>
<text class="xk" x="484.7" y="594.6" font-size="2.9">ZHZ 107 ULIL SNONDA</text>
<text class="xb" x="512" y="590" font-size="3">1.2</text>
<text class="xk" x="528.5" y="583" font-size="3.5" transform="rotate(68 528.500 583)">45 m³/h</text>
<text class="xb" x="521" y="604" font-size="2.6">#125</text>
<text class="xb" x="560" y="608.5" font-size="2.6" text-anchor="middle">ZÁD. - PŘEDS.</text>
<text class="xn" x="560" y="615.2" font-size="4.4" text-anchor="middle">1.09</text>
<text class="xb" x="560" y="620" font-size="3" text-anchor="middle">-0,00</text>
<text class="xb" x="560" y="623.8" font-size="2.2" text-anchor="middle">+0,000</text>
<text class="xk" x="557" y="640" font-size="3.5" transform="rotate(-35 557 640)">25 m³/h</text>
<text class="xk" x="466" y="623.5" font-size="2.3">KUCHYŇSKÝ KOUT</text>
<text class="xn" x="471.7" y="629.5" font-size="4.4" text-anchor="middle">1.11</text>
<text class="xb" x="471.7" y="634.3" font-size="3" text-anchor="middle">-0,00</text>
<text class="xb" x="471.7" y="638" font-size="2.2" text-anchor="middle">+0,000</text>
<text class="xk" x="480" y="627" font-size="3.3" transform="rotate(12 480 627)">50 m³/h</text>
<text class="xk" x="479" y="651" font-size="3.3" transform="rotate(-20 479 651)">125 v.2,5</text>
<text class="xk" x="479" y="668" font-size="3.3" transform="rotate(-55 479 668)">160 v.2,5</text>
<text class="xk" x="532" y="625.3" font-size="2.2">ZÁSOBNÍK</text>
<text class="xk" x="513" y="653.5" font-size="2.6">#125</text>
<text class="xb" x="547" y="676" font-size="2.6">#125</text>
<text class="xk" x="518.6" y="702.6" font-size="2.6" text-anchor="middle">DĚTSKÝ POKOJ</text>
<text class="xr" x="518.6" y="708.9" font-size="5" text-anchor="middle">1.13</text>
<text class="xk" x="518.6" y="713.9" font-size="3" text-anchor="middle">-0,00</text>
<text class="xk" x="518.6" y="717.7" font-size="2.4" text-anchor="middle">+0,000</text>
<text class="xk" x="540" y="695" font-size="3.5" transform="rotate(-78 540 695)">36 m³/h</text>
<text class="xb" x="497.3" y="752.1" font-size="2.8" text-anchor="middle">1</text>
<text class="xb" x="539.6" y="752.1" font-size="2.8" text-anchor="middle">1</text>
<text class="xb" x="543.3" y="777" font-size="2.6" text-anchor="middle">TERASA</text>
<text class="xn" x="543.3" y="783.7" font-size="4.4" text-anchor="middle">1.14</text>
<text class="xk" x="582.3" y="818.8" font-size="2.9" textLength="21.500" lengthAdjust="spacingAndGlyphs">PŘÍL ZAKR. JÍMKY</text>
<text class="xk" x="582.3" y="821.8" font-size="2.9" textLength="21.500" lengthAdjust="spacingAndGlyphs">VIZ. VÝKR. KANAL.</text>
<text class="xn" x="784.1" y="517.2" font-size="4" text-anchor="middle">1</text>
<text text-anchor="end" class="xk" x="821.2" y="866" font-size="3.6">CHODNÍK</text>
<text class="xb" x="789" y="827" font-size="2.8" text-anchor="middle">Dvojgaráž</text>
<text class="xb" x="789" y="830" font-size="2.4" text-anchor="middle">32,40 m²</text>
<text class="xn" x="712.1" y="517.2" font-size="4" text-anchor="middle">1</text>
<text text-anchor="start" class="xk" x="675" y="866" font-size="3.6">CHODNÍK</text>
<text class="xb" x="707.2" y="827" font-size="2.8" text-anchor="middle">Dvojgaráž</text>
<text class="xb" x="707.2" y="830" font-size="2.4" text-anchor="middle">32,40 m²</text>
<text text-anchor="end" class="xr" x="776.7" y="460.8" font-size="5.5">A'</text>
<text text-anchor="end" class="xr" x="774.2" y="866.8" font-size="5.5">A</text>
<text text-anchor="end" class="xb" x="830.2" y="569.5" font-size="2.4">-1,50</text>
<text class="xk" x="849" y="580.2" font-size="2.6" text-anchor="middle">ZÁD. - PŘEDS.</text>
<text class="xr" x="849" y="586.5" font-size="5" text-anchor="middle">1.02</text>
<text class="xk" x="849" y="591.5" font-size="3" text-anchor="middle">-0,00</text>
<text class="xk" x="849" y="595.3" font-size="2.4" text-anchor="middle">+0,000</text>
<text text-anchor="end" class="xk" x="815.8" y="586.3" font-size="2.9">ZHZ 107 ULIL SNONDA</text>
<text text-anchor="end" class="xb" x="789.7" y="581.8" font-size="3">1.2</text>
<text class="xb" x="846.2" y="646.5" font-size="2.2" text-anchor="middle">+0,000</text>
<text text-anchor="end" class="xk" x="832.2" y="623.8" font-size="2.3">KUCHYŇSKÝ KOUT</text>
<text class="xn" x="826.4" y="629.7" font-size="4.4" text-anchor="middle">1.05</text>
<text class="xb" x="826.4" y="634.5" font-size="3" text-anchor="middle">-0,00</text>
<text class="xb" x="826.4" y="638" font-size="2.2" text-anchor="middle">+0,000</text>
<text text-anchor="end" class="xk" x="821.2" y="637" font-size="3.3" transform="rotate(18 821.2 637)">125 v.2,5</text>
<text text-anchor="end" class="xk" x="819.2" y="650" font-size="3.3" transform="rotate(22 819.2 650)">125 v.2,5</text>
<text text-anchor="end" class="xk" x="775.2" y="656.8" font-size="2.6">#125</text>
<text text-anchor="end" class="xb" x="830.2" y="676" font-size="2.6">#125</text>
<text text-anchor="end" class="xb" x="774.2" y="676" font-size="2.6">#125</text>
<text class="xk" x="829.6" y="703" font-size="2.6" text-anchor="middle">DĚTSKÝ POKOJ</text>
<text class="xr" x="829.6" y="709.3" font-size="5" text-anchor="middle">1.04</text>
<text class="xk" x="829.6" y="714.3" font-size="3" text-anchor="middle">-0,00</text>
<text class="xk" x="829.6" y="718.1" font-size="2.4" text-anchor="middle">+0,000</text>
<text class="xk" x="774.4" y="703" font-size="2.6" text-anchor="middle">POKOJ</text>
<text class="xr" x="774.4" y="709.3" font-size="5" text-anchor="middle">1.07</text>
<text class="xk" x="774.4" y="714.3" font-size="3" text-anchor="middle">-0,00</text>
<text class="xk" x="774.4" y="718.1" font-size="2.4" text-anchor="middle">+0,000</text>
<text text-anchor="end" class="xk" x="814.2" y="697" font-size="3.5" transform="rotate(80 814.2 697)">36 m³/h</text>
<text text-anchor="end" class="xk" x="759.2" y="697" font-size="3.5" transform="rotate(80 759.2 697)">45 m³/h</text>
<text class="xb" x="825.4" y="751.8" font-size="2.8" text-anchor="middle">1</text>
<text class="xb" x="783.3" y="751.8" font-size="2.8" text-anchor="middle">1</text>
<text class="xk" x="787.5" y="559.8" font-size="2.6" text-anchor="middle">OBÝVÁK</text>
<text class="xr" x="787.5" y="566.1" font-size="5" text-anchor="middle">1.03</text>
<text class="xk" x="787.5" y="571.1" font-size="3" text-anchor="middle">-0,00</text>
<text class="xk" x="787.5" y="574.9" font-size="2.4" text-anchor="middle">+0,000</text>
<text text-anchor="end" class="xk" x="761.2" y="586" font-size="3.5" transform="rotate(75 761.2 586)">60 m³/h</text>
<text text-anchor="end" class="xb" x="767.2" y="601" font-size="2.6">#125</text>
<text class="xb" x="828.8" y="777.5" font-size="2.6" text-anchor="middle">TERASA</text>
<text class="xn" x="828.8" y="784.2" font-size="4.4" text-anchor="middle">1.08</text>
<text text-anchor="end" class="xr" x="660.7" y="457.5" font-size="5.5">B'</text>
<text text-anchor="end" class="xr" x="659.9" y="866.8" font-size="5.5">B</text>
<text text-anchor="end" class="xb" x="671.2" y="569.5" font-size="2.4">-1,50</text>
<text class="xk" x="708.1" y="559.8" font-size="2.6" text-anchor="middle">OBÝVÁK</text>
<text class="xr" x="708.1" y="566.1" font-size="5" text-anchor="middle">1.10</text>
<text class="xk" x="708.1" y="571.1" font-size="3" text-anchor="middle">-0,00</text>
<text class="xk" x="708.1" y="574.9" font-size="2.4" text-anchor="middle">+0,000</text>
<text text-anchor="end" class="xk" x="725.5" y="594.6" font-size="2.9">ZHZ 107 ULIL SNONDA</text>
<text text-anchor="end" class="xb" x="698.2" y="590" font-size="3">1.2</text>
<text text-anchor="end" class="xk" x="681.7" y="583" font-size="3.5" transform="rotate(-68 681.7 583)">45 m³/h</text>
<text text-anchor="end" class="xb" x="689.2" y="604" font-size="2.6">#125</text>
<text class="xb" x="650.2" y="608.5" font-size="2.6" text-anchor="middle">ZÁD. - PŘEDS.</text>
<text class="xn" x="650.2" y="615.2" font-size="4.4" text-anchor="middle">1.09</text>
<text class="xb" x="650.2" y="620" font-size="3" text-anchor="middle">-0,00</text>
<text class="xb" x="650.2" y="623.8" font-size="2.2" text-anchor="middle">+0,000</text>
<text text-anchor="end" class="xk" x="653.2" y="640" font-size="3.5" transform="rotate(35 653.2 640)">25 m³/h</text>
<text text-anchor="end" class="xk" x="744.2" y="623.5" font-size="2.3">KUCHYŇSKÝ KOUT</text>
<text class="xn" x="738.5" y="629.5" font-size="4.4" text-anchor="middle">1.11</text>
<text class="xb" x="738.5" y="634.3" font-size="3" text-anchor="middle">-0,00</text>
<text class="xb" x="738.5" y="638" font-size="2.2" text-anchor="middle">+0,000</text>
<text text-anchor="end" class="xk" x="730.2" y="627" font-size="3.3" transform="rotate(-12 730.2 627)">50 m³/h</text>
<text text-anchor="end" class="xk" x="731.2" y="651" font-size="3.3" transform="rotate(20 731.2 651)">125 v.2,5</text>
<text text-anchor="end" class="xk" x="731.2" y="668" font-size="3.3" transform="rotate(55 731.2 668)">160 v.2,5</text>
<text text-anchor="end" class="xk" x="678.2" y="625.3" font-size="2.2">ZÁSOBNÍK</text>
<text text-anchor="end" class="xk" x="697.2" y="653.5" font-size="2.6">#125</text>
<text text-anchor="end" class="xb" x="663.2" y="676" font-size="2.6">#125</text>
<text class="xk" x="691.6" y="702.6" font-size="2.6" text-anchor="middle">DĚTSKÝ POKOJ</text>
<text class="xr" x="691.6" y="708.9" font-size="5" text-anchor="middle">1.13</text>
<text class="xk" x="691.6" y="713.9" font-size="3" text-anchor="middle">-0,00</text>
<text class="xk" x="691.6" y="717.7" font-size="2.4" text-anchor="middle">+0,000</text>
<text text-anchor="end" class="xk" x="670.2" y="695" font-size="3.5" transform="rotate(78 670.2 695)">36 m³/h</text>
<text class="xb" x="712.9" y="752.1" font-size="2.8" text-anchor="middle">1</text>
<text class="xb" x="670.6" y="752.1" font-size="2.8" text-anchor="middle">1</text>
<text class="xb" x="666.9" y="777" font-size="2.6" text-anchor="middle">TERASA</text>
<text class="xn" x="666.9" y="783.7" font-size="4.4" text-anchor="middle">1.14</text>
<text text-anchor="end" class="xk" x="627.9" y="818.8" font-size="2.9" textLength="21.500" lengthAdjust="spacingAndGlyphs">PŘÍL ZAKR. JÍMKY</text>
<text text-anchor="end" class="xk" x="627.9" y="821.8" font-size="2.9" textLength="21.500" lengthAdjust="spacingAndGlyphs">VIZ. VÝKR. KANAL.</text>
<path class="t" d="M604.9 605V860M607.8 605V860"/>
<text class="xr" x="595.4" y="628" font-size="5">Ld</text>
<path class="t" d="M586 629.4L602 629.4"/>
<text class="xr" x="611.5" y="628" font-size="5">Ld'</text>
<path class="t" d="M611 629.4L630 629.4"/>
<rect class="lb" x="613.2" y="862.5" width="11.5" height="3.8"/>
<circle class="t" cx="724.8" cy="738.8" r="3.4"/><path class="t" d="M721.4 738.8L728.2 738.8"/><path class="t" d="M724.8 733.4L724.8 743.2"/><circle class="t" cx="768.2" cy="738.8" r="3.4"/><path class="t" d="M764.8 738.8L771.6 738.8"/><path class="t" d="M768.2 733.4L768.2 743.2"/><circle class="t" cx="837.6" cy="738.8" r="3.4"/><path class="t" d="M834.2 738.8L841 738.8"/><path class="t" d="M837.6 733.4L837.6 743.2"/>
<rect class="wh" x="866" y="861" width="20" height="3.5"/>
<path class="t" d="M876.7 836.6L876.7 864"/>
<rect class="tbx" x="839.1" y="864.1" width="127.5" height="57.1"/>
<text class="tv" x="842.6" y="872.3" font-size="7.1" textLength="59.700" lengthAdjust="spacingAndGlyphs">VZDUCHOTECHNIKA</text>
<text class="tg" x="842.6" y="875.6" font-size="2.3" textLength="92" lengthAdjust="spacingAndGlyphs">DOKUMENTACE PRO STAVEBNÍ POVOLENÍ - PROJEKČNÍ ÚTVAR A KONSTRUKCE</text>
<text class="xk" x="946.7" y="870" font-size="2.7" textLength="15.300" lengthAdjust="spacingAndGlyphs">AKCE ČÍSLO: 11</text>
<text class="xk" x="946.7" y="872.7" font-size="2.7" textLength="15.300" lengthAdjust="spacingAndGlyphs">TEL: 417 555 222</text>
<text class="xk" x="946.7" y="875.4" font-size="2.7" textLength="15.300" lengthAdjust="spacingAndGlyphs">IČO: 4887 01 188</text>
<path class="k" d="M839.1 878.5L966.6 878.5"/>
<path class="t" d="M839.1 880L966.6 880"/>
<path class="t" d="M839.1 883.5L966.6 883.5"/>
<path class="t" d="M839.1 887.2L966.6 887.2"/>
<path class="t" d="M839.1 890.7L966.6 890.7"/>
<path class="k" d="M839.1 894.4L966.6 894.4"/>
<path class="m" d="M924.5 880L924.5 921.2"/>
<path class="m" d="M950.9 894.4L950.9 921.2"/>
<path class="t" d="M855.5 880L855.5 894.4"/>
<path class="t" d="M934 880L934 894.4"/>
<path class="k" d="M839.1 905.4L924.5 905.4"/>
<path class="m" d="M839.1 912.5L924.5 912.5"/>
<text class="xk" x="840.5" y="882.7" font-size="2.8">INVESTOR</text>
<text class="xk" x="856.5" y="882.7" font-size="2.8" textLength="60" lengthAdjust="spacingAndGlyphs">T - DŮM GROUP s.r.o., U NOVÝCH LÁZNÍ 1284, TEPLICE</text>
<text class="xk" x="925.5" y="882.7" font-size="2.8">DATUM</text>
<text class="xk" x="965.5" y="882.7" font-size="2.8" text-anchor="end">11/2015</text>
<text class="xk" x="840.5" y="886.3" font-size="2.8">ZPRACOVATEL</text>
<text class="xk" x="856.5" y="886.3" font-size="2.8" textLength="60" lengthAdjust="spacingAndGlyphs">HELIS s.r.o., LAL. ŽIŽKA 1284 L., TEPLICE</text>
<text class="xk" x="925.5" y="886.3" font-size="2.8">ZAK. ČÍSLO</text>
<text class="xk" x="965.5" y="886.3" font-size="2.8" text-anchor="end">04/264/2015</text>
<text class="xk" x="840.5" y="889.9" font-size="2.8">ARCH.</text>
<text class="xk" x="856.5" y="889.9" font-size="2.8" textLength="12" lengthAdjust="spacingAndGlyphs">TEPLICE</text>
<text class="xk" x="925.5" y="889.9" font-size="2.8">MĚŘÍTKO</text>
<text class="xk" x="965.5" y="889.9" font-size="2.8" text-anchor="end">1 : 50</text>
<text class="xk" x="840.5" y="893.5" font-size="2.8">STUPEŇ</text>
<text class="xk" x="856.5" y="893.5" font-size="2.8" textLength="38" lengthAdjust="spacingAndGlyphs">DOKUMENTACE PRO STAVEBNÍ ŘÍZENÍ</text>
<text class="xk" x="925.5" y="893.5" font-size="2.8">Č. VÝKRESU</text>
<text class="xk" x="965.5" y="893.5" font-size="2.8" text-anchor="end">D.1.4.1</text>
<text class="xk" x="840.5" y="896.8" font-size="2.2">AKCE</text>
<text class="xk" x="840.5" y="907.3" font-size="2.2">ČÁST</text>
<text class="xk" x="840.5" y="914.4" font-size="2.2">VÝKRES</text>
<text class="xk" x="952.5" y="897.3" font-size="2.2">Č. KOPIE</text>
<text class="tg" x="844.1" y="899.8" font-size="3.3" textLength="77.700" lengthAdjust="spacingAndGlyphs">OBYTNÁ SKUPINA - PROSETICKÝ SVAH TEPLICE</text>
<text class="tg" x="844.1" y="903.9" font-size="3.3" textLength="49" lengthAdjust="spacingAndGlyphs">SO 01_I - BYTOVÝ DŮM "TYP I"</text>
<text class="tg" x="848.3" y="910.4" font-size="3.3" textLength="47.400" lengthAdjust="spacingAndGlyphs">D.1.4.1 - VZDUCHOTECHNIKA</text>
<text class="tg" x="848.3" y="918.1" font-size="3.3" textLength="22.700" lengthAdjust="spacingAndGlyphs">PŮDORYS 1.NP</text>
<path d="M566.500 413V926M883 413V926" stroke="#fff" stroke-width=".8" opacity=".8"/>
<path d="M684.3 581.8c-2.300-2.800-6.300-5.900-6.300-10.400a6.300 6.300 0 0 1 12.600 0c0 4.500-4 7.600-6.300 10.400z" fill="#fbd13f"/>
</svg>
<!--/PLAN-->
<div id="side"><div class="hd"><svg style="position:absolute;left:10px;top:8px" width="20" height="20" viewBox="0 0 20 20"><circle cx="10" cy="9.800" r="8.100" fill="none" stroke="#f6b52e" stroke-width="2.400"/><path d="M5.800 9.200c0-2.900 1.800-4.700 4.300-4.700s4.300 1.800 4.300 4.700z" fill="#f8c23a"/><path d="M5 9.600h10.500v1.300H5z" fill="#f6b52e"/><path d="M7.200 6.700h5.800M6.600 8h7" stroke="#2f3136" stroke-width=".6"/><path d="M8.300 12.200l1.200 3.300 2.600 3.200M11.500 12l.8 2.200" fill="none" stroke="#f6b52e" stroke-width="1.500"/><path d="M11.500 15.500l3.300 3.700" stroke="#2f3136" stroke-width="1.600"/></svg>
<svg style="position:absolute;left:161px;top:13px" width="15" height="10" viewBox="0 0 15 10"><path d="M1 1.200l6.500 7L14 1.200" fill="none" stroke="#fff" stroke-width="1.400"/></svg><span class="nm">Demo Project - Cze...</span></div>
<div class="it on" style="top:35px"><svg style="left:13px;top:6px" width="14" height="14" viewBox="0 0 14 14"><rect x=".7" y=".7" width="12.600" height="12.600" fill="none" stroke="#fff" stroke-width="1.400"/><path d="M3 3.200h8.200v2H3zM5.600 5.200h2v4.600h-2zM3.500 7h2.200v2.600H3.500zM8 7h5.400v6.400H8z" fill="#fff"/></svg><span class="tx">Plány</span></div>
<div class="it" style="top:62px"><svg style="left:13px;top:7px" width="14" height="12" viewBox="0 0 14 12"><g fill="#fff"><rect x="0" y="0.5" width="2.6" height="2.6" rx=".4"/><rect x="0" y="4.7" width="2.6" height="2.6" rx=".4"/><rect x="0" y="8.9" width="2.6" height="2.6" rx=".4"/><rect x="4" y="0.8" width="10" height="2" rx=".4"/><rect x="4" y="5" width="10" height="2" rx=".4"/><rect x="4" y="9.2" width="10" height="2" rx=".4"/></g></svg><span class="tx">Úkoly</span></div>
<div class="it" style="top:89px"><svg style="left:13px;top:7px" width="14" height="12" viewBox="0 0 14 12"><path fill="#fff" fill-rule="evenodd" d="M4.4 0.3h5.2l.9 1.7h2.2c.7 0 1.3.6 1.3 1.3v7c0 .7-.6 1.3-1.3 1.3H1.3C.6 11.6 0 11 0 10.300v-7C0 2.600.6 2 1.300 2h2.200zM7 3.600a3.100 3.100 0 1 0 0 6.200 3.100 3.100 0 0 0 0-6.200zm0 1.200a1.900 1.900 0 1 1 0 3.800 1.900 1.900 0 0 1 0-3.800z"/></svg><span class="tx">Fotografie</span></div>
<div class="it" style="top:116px"><svg style="left:14px;top:6px" width="11" height="14" viewBox="0 0 11 14"><path fill="#fff" fill-rule="evenodd" d="M1.2 1.700h2.100C3.500.7 4.400 0 5.500 0s2 .7 2.200 1.700h2.100c.7 0 1.200.5 1.200 1.200v9.900c0 .7-.5 1.200-1.200 1.200H1.200C.5 14 0 13.500 0 12.800V2.900c0-.7.5-1.200 1.200-1.200zM5.500 1.100a.7.7 0 1 0 0 1.400.7.700 0 0 0 0-1.400zM2.200 5.200v1.100h6.600V5.200zm0 2.500v1.100h6.600V7.700zm0 2.500v1.100h4V10.200z"/></svg><span class="tx">Formuláře</span></div>
<div class="it" style="top:143px"><svg style="left:13px;top:6px" width="14" height="14" viewBox="0 0 14 14"><path fill="none" stroke="#fff" stroke-width="1.3" stroke-linecap="round" d="M11.800 6.300 6.600 11.500a2.700 2.700 0 0 1-3.900-3.900L8.300 2a1.900 1.900 0 0 1 2.700 2.700L5.600 10.100a.9.9 0 0 1-1.300-1.300L9.300 3.800"/></svg><span class="tx">Soubory</span></div>
<div class="it" style="top:170px"><svg style="left:12px;top:6px" width="15" height="15" viewBox="0 0 15 15"><path fill="#fff" d="M7.500.3 14 3 7.500 5.700 1 3zM.5 4l6.400 2.700v7.800L.5 11.700zM14.500 4v7.700l-6.400 2.800V6.700z"/></svg><span class="tx">3D modely</span></div>
<div class="it" style="top:251px"><svg style="left:13px;top:6px" width="14" height="14" viewBox="0 0 14 14"><path fill="#fff" d="M7 .3 9.100 4.800 13.900 5.400 10.300 8.700 11.300 13.500 7 11.100 2.700 13.500 3.700 8.700.1 5.400 4.900 4.800z"/></svg><span class="tx">Moje úkoly</span><span class="ct">1</span></div>
<div class="it" style="top:278px"><svg style="left:13px;top:8px" width="14" height="10" viewBox="0 0 14 10"><path fill="#fff" fill-rule="evenodd" d="M7 .2C3.800.2 1.200 2.200 0 5c1.200 2.800 3.800 4.800 7 4.800S12.800 7.800 14 5C12.800 2.200 10.200.2 7 .2zM7 2a3 3 0 1 1 0 6 3 3 0 0 1 0-6zm0 1.300A1.700 1.700 0 0 0 7 6.700 1.700 1.700 0 0 0 8.700 5a1.100 1.100 0 0 1-1.700-1.700z"/></svg><span class="tx">Sledované úkoly</span><span class="ct">1</span></div>
<div class="it on" style="top:305px"><svg style="left:15px;top:7px" width="12" height="13" viewBox="0 0 12 13"><g fill="#fff"><rect x="0" y="0.3" width="2.800" height="2.800" rx=".5"/><rect x="4.2" y="0.3" width="2.800" height="2.800" rx=".5"/><rect x="8.4" y="0.3" width="2.800" height="2.800" rx=".5"/><rect x="0" y="4.8" width="2.800" height="2.800" rx=".5"/><rect x="4.2" y="4.8" width="2.800" height="2.800" rx=".5"/><rect x="8.4" y="4.8" width="2.800" height="2.800" rx=".5"/><rect x="0" y="9.3" width="2.800" height="2.800" rx=".5"/><rect x="4.2" y="9.3" width="2.800" height="2.800" rx=".5"/><rect x="8.4" y="9.3" width="2.800" height="2.800" rx=".5"/></g></svg><span class="tx">Všechny úkoly</span><span class="ct">1</span></div>
<div class="it" style="top:332px"><span class="bd">PO</span><span class="tx">Podlahy</span></div>
<div class="it" style="top:359px"><span class="bd">SL</span><span class="tx">Slaboproud</span></div>
<div class="it" style="top:386px"><span class="bd">SD</span><span class="tx">Sádrokarton</span></div>
<div class="it" style="top:413px"><span class="bd">TP</span><span class="tx">Terénní práce</span></div>
<div class="it" style="top:440px"><span class="bd">VO</span><span class="tx">Voda</span></div>
<div class="it" style="top:467px"><span class="bd">VZ</span><span class="tx">VZT</span></div>
<div class="it" style="top:494px"><span class="bd">ZA</span><span class="tx">Zabezpečení</span></div>
<div class="it" style="top:521px"><svg style="left:14px;top:8px" width="11" height="11" viewBox="0 0 11 11"><path stroke="#fff" stroke-width="1.600" d="M5.500.5v10M.5 5.500h10"/></svg><span class="tx">Nová kategorie</span></div>
<div style="position:absolute;left:14px;top:211px;width:162px;height:1px;background:#55585d"></div>
<div class="sh">Úkoly</div>
</div>
<div id="tools">
<div class="tb" style="top:116px;height:27px"><svg style="position:absolute;left:5px;top:6px" width="17" height="16" viewBox="0 0 17 16"><path d="M1.500 5.500V1.500h4.500M11 1.500h4.500v4M15.500 10.500v4H11M6 14.500H1.500v-4" fill="none" stroke="#fff" stroke-width="2.100"/></svg></div>
<div class="tb" style="top:152px;height:54px"><div style="position:absolute;left:0;top:27px;width:27px;height:27px;background:#3a3b3d;border-top:1px solid #7b7d80;border-radius:0 0 4px 4px"></div>
<svg style="position:absolute;left:7px;top:7px" width="13" height="13" viewBox="0 0 13 13"><path d="M6.500.5v12M.5 6.500h12" stroke="#fff" stroke-width="2"/></svg>
<div style="position:absolute;left:8px;top:40px;width:10px;height:2px;background:#9b9c9e"></div></div>
<div class="tb" style="top:215px;height:162px">
<svg style="position:absolute;left:6px;top:5px" width="15" height="18" viewBox="0 0 15 18"><path d="M7.500 1.200c3.200 0 5.700 2.400 5.700 5.600 0 3.600-3.700 7.400-5.700 9.800C5.500 14.200 1.800 10.400 1.800 6.800c0-3.200 2.500-5.600 5.700-5.600z" fill="none" stroke="#fff" stroke-width="1.100"/><circle cx="7.500" cy="7" r="1.700" fill="#fff"/></svg>
<svg style="position:absolute;left:4px;top:32px" width="18" height="17" viewBox="0 0 18 17"><g fill="none" stroke="#fff" stroke-width="1.150" transform="rotate(-38 9 8.500)"><rect x=".7" y="5.500" width="7.600" height="5.800" rx="2.100"/><rect x="9.700" y="5.500" width="7.600" height="5.800" rx="2.100"/><path d="M5.300 8.400h7.400"/></g></svg>
<svg style="position:absolute;left:5px;top:60px" width="16" height="16" viewBox="0 0 16 16"><g transform="rotate(-42 8 8)"><rect x="2.600" y="6.400" width="10.600" height="3.200" fill="#fff"/><path d="M1.700 6.900-.6 8l2.300 1.100zM14 6.400h1.200l1 .6v2l-1 .6H14z" fill="#fff"/></g></svg>
<svg style="position:absolute;left:4px;top:87px" width="17" height="16" viewBox="0 0 17 16"><circle cx="10.200" cy="5.600" r="4.900" fill="none" stroke="#fff" stroke-width="1.100"/><rect x="1.500" y="5.600" width="9" height="9" rx="1" fill="#43464a" stroke="#fff" stroke-width="1.300"/></svg>
<span style="position:absolute;left:0;top:108px;width:27px;text-align:center;color:#fff;font-size:21px;line-height:26px">a</span>
<svg style="position:absolute;left:5px;top:140px" width="16" height="16" viewBox="0 0 16 16"><g transform="rotate(-42 8 8)" fill="none" stroke="#fff"><rect x=".6" y="5.600" width="14.800" height="4.800" rx=".6" stroke-width="1.100"/><path d="M4 10.200v-1.900M6.700 10.200v-1.900M9.400 10.200v-1.900M12.100 10.200v-1.900" stroke-width=".9"/></g></svg>
</div>
<div class="tb" style="top:388px;height:27px"><div style="position:absolute;left:7px;top:7px;width:13px;height:13px;border-radius:50%;background:#fe0000;border:1px solid #fff"></div></div>
<div class="tb" style="top:426px;height:81px">
<svg style="position:absolute;left:6.500px;top:6.500px" width="13.500" height="13.500" viewBox="0 0 15 15"><path d="M7.500 1.500v12M1.500 7.500h12" stroke="#fff" stroke-width="1.100"/><path d="M7.500 0 9.700 2.600H5.300zM7.500 15 5.300 12.400h4.400zM0 7.500 2.600 5.300v4.400zM15 7.500 12.400 9.700V5.300z" fill="#fff"/></svg>
<svg style="position:absolute;left:5px;top:33px" width="16" height="15" viewBox="0 0 16 15"><path d="M3.300 7.400a5.200 5.200 0 1 1 3.400 5.200" fill="none" stroke="#fff" stroke-width="1.150"/><path d="M.3 6h5.800L3.200 9.400z" fill="#fff"/></svg>
<svg style="position:absolute;left:7px;top:60px" width="13" height="15" viewBox="0 0 13 15"><path d="M.5 3.200h12M4 3V1.200h5V3M1.800 3.400v9.800c0 .5.400.9.900.9h7.600c.5 0 .9-.4.900-.9V3.400M4.800 5.800v5.700M8.200 5.800v5.700" fill="none" stroke="#fff" stroke-width="1.100"/></svg>
</div>
<div class="tb" style="top:116px;left:1007px;height:27px"><svg style="position:absolute;left:5px;top:7px" width="17" height="13" viewBox="0 0 17 13"><path d="M.8 6.500C2.600 3.300 5.300 1.500 8.500 1.500s5.900 1.800 7.700 5c-1.800 3.200-4.500 5-7.700 5s-5.900-1.800-7.700-5z" fill="none" stroke="#fff" stroke-width="1.300"/><path d="M8.500 3.300a3.200 3.200 0 1 1 0 6.400 3.200 3.200 0 0 1 0-6.400zm-1.100.9a1.500 1.500 0 1 0 0 2.600 1.500 1.500 0 0 0 0-2.600z" fill="#fff" fill-rule="evenodd"/></svg></div>
</div>
<div id="hl"></div>
</body>
</html>
